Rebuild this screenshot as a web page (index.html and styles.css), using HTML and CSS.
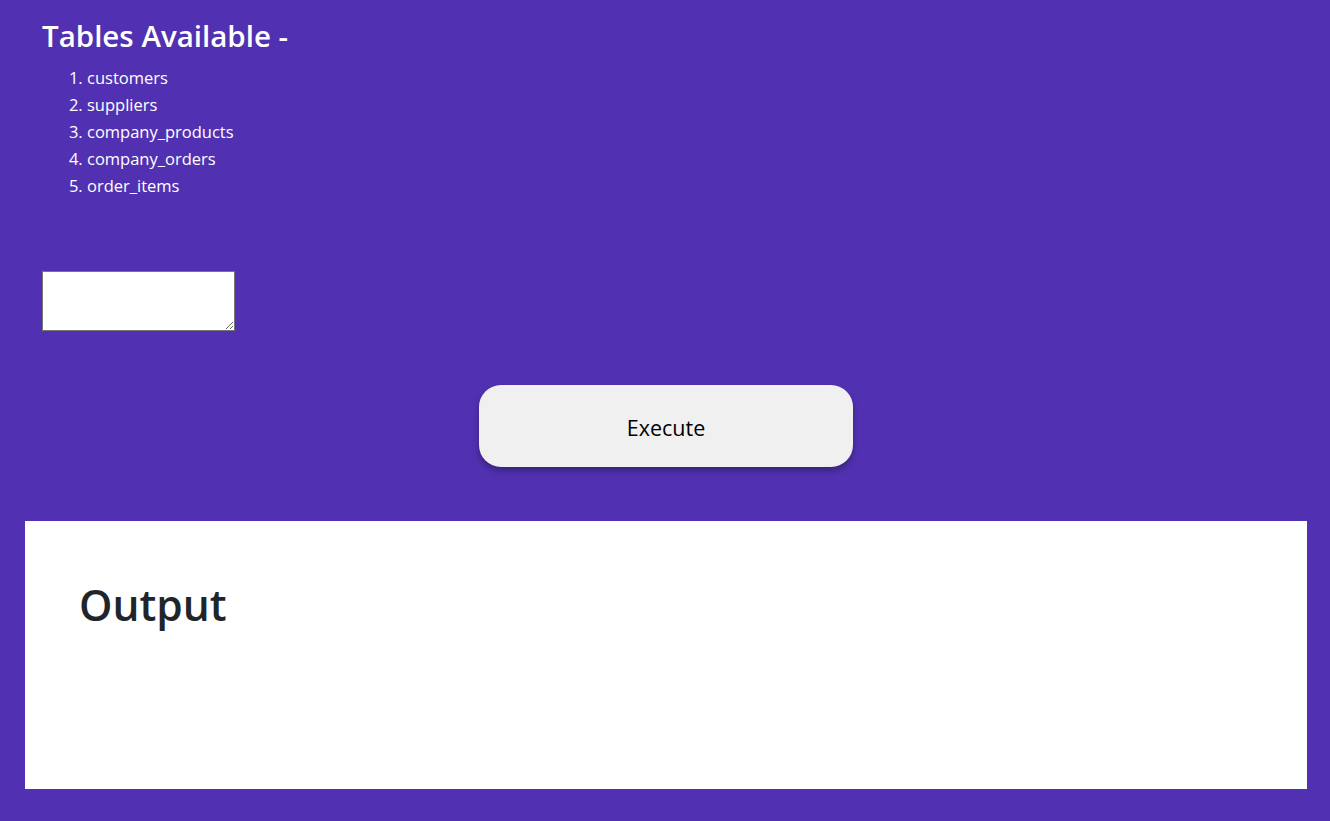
FILE: index.html
```html
<!DOCTYPE html>
<html>
<head>
<meta charset="utf-8">
<link rel="stylesheet" href="styles.css">
</head>
<body>
<div class="top">
  <h2 class="title">Tables Available -</h2>
  <ol class="tables">
    <li>customers</li>
    <li>suppliers</li>
    <li>company_products</li>
    <li>company_orders</li>
    <li>order_items</li>
  </ol>
  <textarea class="query"></textarea>
  <div class="actions">
    <button class="exec">Execute</button>
  </div>
</div>
<section class="output">
  <h1 class="out-title">Output</h1>
</section>
</body>
</html>
```
FILE: styles.css
```css
html, body {
  margin: 0;
  padding: 0;
}
body {
  background: #5131b1;
  font-family: "Open Sans", "Noto Sans", sans-serif;
  color: #ffffff;
  width: 1330px;
  height: 821px;
  overflow: hidden;
}
.top {
  padding: 14px 0 0 42px;
}
.title {
  margin: 0;
  font-size: 29.5px;
  font-weight: 600;
  line-height: 44px;
}
.tables {
  margin: 6px 0 0 0;
  padding-left: 45px;
  font-size: 16.5px;
  line-height: 27px;
}
.query {
  display: block;
  margin-top: 72px;
  width: 193px;
  height: 60px;
  box-sizing: border-box;
  border: 1px solid #767676;
  padding: 2px;
  background: #fff;
  border-radius: 0;
}
.actions {
  display: flex;
  justify-content: center;
  padding: 54px 40px 0 0;
}
.exec {
  width: 374px;
  height: 82px;
  border: none;
  border-radius: 22px;
  background: #f0f0f0;
  color: #000;
  font-family: "Open Sans", "Noto Sans", sans-serif;
  font-size: 21.5px;
  padding-top: 3px;
  box-shadow: 0 4px 6px rgba(0, 0, 0, 0.3);
}
.output {
  margin: 54px 23px 0 25px;
  height: 268px;
  background: #fff;
  padding: 54px 0 0 54px;
  box-sizing: border-box;
}
.out-title {
  margin: 0;
  color: #212529;
  font-size: 42.5px;
  font-weight: 600;
  line-height: 60px;
}
```
